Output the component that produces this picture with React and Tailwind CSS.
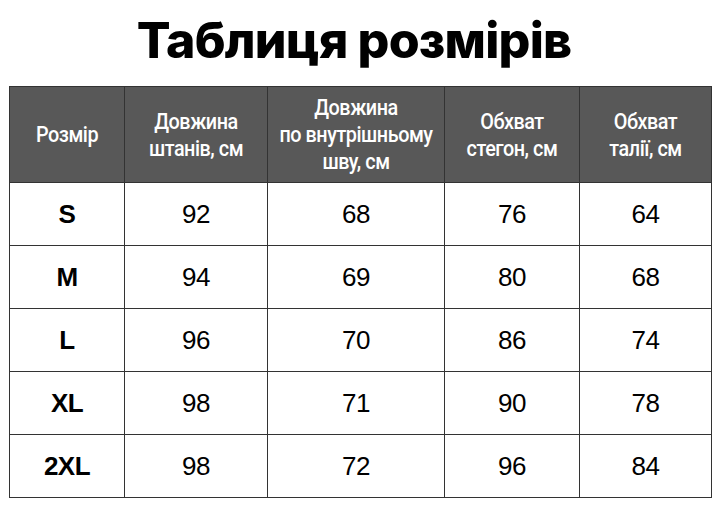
const headers = [
  ["Розмір"],
  ["Довжина", "штанів, см"],
  ["Довжина", "по внутрішньому", "шву, см"],
  ["Обхват", "стегон, см"],
  ["Обхват", "талії, см"],
];

const rows = [
  ["S", "92", "68", "76", "64"],
  ["M", "94", "69", "80", "68"],
  ["L", "96", "70", "86", "74"],
  ["XL", "98", "71", "90", "78"],
  ["2XL", "98", "72", "96", "84"],
];

const widths = ["w-[115px]", "w-[143px]", "w-[177px]", "w-[135px]", "w-[132px]"];

export default function App() {
  return (
    <div className="w-[720px] h-[507px] bg-white flex flex-col items-center overflow-hidden">
      <h1 className="mt-[3px] mr-[12px] h-[74px] flex items-center text-[50px] font-extrabold tracking-[-0.8px] text-black [font-family:Inter,sans-serif]">
        Таблиця розмірів
      </h1>
      <table className="mt-[9px] ml-[1px] border-collapse border-[1.5px] border-[#333] [font-family:'Liberation_Sans',Arial,sans-serif]">
        <thead>
          <tr className="h-[96px] bg-[#585858]">
            {headers.map((h, i) => (
              <th key={i} className={`${widths[i]} border border-[#333] p-0 text-white font-medium text-[22px] leading-[27px] tracking-[-0.5px] [font-family:Roboto,sans-serif]`}>
                {h.map((line, j) => (
                  <div key={j} className="whitespace-nowrap scale-x-[0.9]">{line}</div>
                ))}
              </th>
            ))}
          </tr>
        </thead>
        <tbody>
          {rows.map((r, i) => (
            <tr key={i} className="h-[63px]">
              {r.map((c, j) => (
                <td key={j} className={`border border-[#333] p-0 text-center text-black text-[26px] tracking-[-0.5px] ${j === 0 ? "font-bold" : ""}`}>
                  {c}
                </td>
              ))}
            </tr>
          ))}
        </tbody>
      </table>
    </div>
  );
}
